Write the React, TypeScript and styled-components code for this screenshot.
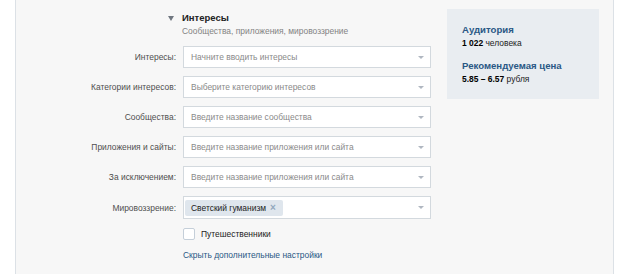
import React from 'react';
import styled, { createGlobalStyle } from 'styled-components';

const GlobalStyle = createGlobalStyle`
  html, body {
    margin: 0;
    padding: 0;
    background: #ffffff;
  }
  body {
    font-family: "Liberation Sans", Arial, sans-serif;
    font-size: 8.45px;
    color: #000;
  }
`;

const Panel = styled.div`
  margin-left: 15px;
  width: 597px;
  height: 274px;
  background: #f7f7f7;
  border-left: 1px solid #dce1e6;
  border-right: 1px solid #dce1e6;
  display: flex;
  align-items: flex-start;
`;

const Form = styled.div`
  display: grid;
  grid-template-columns: 160px 248px;
  column-gap: 7px;
  row-gap: 8px;
  padding-top: 11px;
`;

const SectionHead = styled.div`
  grid-column: 1 / 3;
  display: grid;
  grid-template-columns: 160px auto;
  column-gap: 6px;
`;

const Arrow = styled.span`
  justify-self: end;
  align-self: center;
  width: 0;
  height: 0;
  margin-right: 2px;
  border-left: 3px solid transparent;
  border-right: 3px solid transparent;
  border-top: 5px solid #707780;
`;

const Title = styled.div`
  font-weight: 700;
  font-size: 9.5px;
  line-height: 14px;
  color: #222;
`;

const Subtitle = styled.div`
  grid-column: 2;
  color: #838383;
  line-height: 13px;
`;

const Label = styled.label`
  justify-self: end;
  align-self: center;
  color: #4f4f4f;
`;

const Select = styled.div<{ $tall?: boolean }>`
  box-sizing: border-box;
  height: ${({ $tall }) => ($tall ? 23 : 22)}px;
  background: #fff;
  border: 1px solid #d3d9de;
  display: flex;
  align-items: center;
  padding: 0 6px 0 7px;
`;

const Placeholder = styled.span`
  flex: 1;
  color: #8a8a8a;
`;

const Caret = styled.span`
  width: 0;
  height: 0;
  border-left: 3px solid transparent;
  border-right: 3px solid transparent;
  border-top: 3px solid #b0b7c1;
`;

const Tag = styled.span`
  display: inline-flex;
  align-items: center;
  gap: 4px;
  background: #dfe6ed;
  border-radius: 2px;
  height: 16px;
  padding: 0 7px 0 6px;
  margin-left: -6px;
  color: #222;
`;

const TagClose = styled.span`
  color: #92a8bd;
  font-size: 10px;
  font-weight: 700;
`;

const Spacer = styled.div`
  flex: 1;
`;

const CheckRow = styled.label`
  grid-column: 2;
  display: flex;
  align-items: center;
  gap: 6px;
  height: 14px;
  color: #222;
`;

const Box = styled.span`
  box-sizing: border-box;
  width: 12px;
  height: 12px;
  background: #fff;
  border: 1px solid #c5cfd9;
  border-radius: 2px;
`;

const Link = styled.a`
  grid-column: 2;
  color: #2a5885;
  text-decoration: none;
  line-height: 12px;
`;

const Side = styled.div`
  margin-left: 16px;
  margin-top: 9px;
  width: 152px;
  height: 90px;
  box-sizing: border-box;
  background: #e9edf1;
  padding: 14px 15px;
`;

const SideTitle = styled.div`
  color: #2a5885;
  font-weight: 700;
  font-size: 9.6px;
  line-height: 14px;
`;

const SideValue = styled.div`
  line-height: 12px;
  color: #222;
  margin-bottom: 10px;
  b {
    font-weight: 700;
    color: #000;
  }
`;

const fields = [
  { label: 'Интересы:', placeholder: 'Начните вводить интересы' },
  { label: 'Категории интересов:', placeholder: 'Выберите категорию интересов' },
  { label: 'Сообщества:', placeholder: 'Введите название сообщества' },
  { label: 'Приложения и сайты:', placeholder: 'Введите название приложения или сайта' },
  { label: 'За исключением:', placeholder: 'Введите название приложения или сайта' },
];

export default function App() {
  return (
    <>
      <GlobalStyle />
      <Panel>
        <Form>
          <SectionHead>
            <Arrow />
            <Title>Интересы</Title>
            <Subtitle>Сообщества, приложения, мировоззрение</Subtitle>
          </SectionHead>

          {fields.map((f) => (
            <React.Fragment key={f.label}>
              <Label>{f.label}</Label>
              <Select>
                <Placeholder>{f.placeholder}</Placeholder>
                <Caret />
              </Select>
            </React.Fragment>
          ))}

          <Label>Мировоззрение:</Label>
          <Select $tall>
            <Tag>
              Светский гуманизм <TagClose>×</TagClose>
            </Tag>
            <Spacer />
            <Caret />
          </Select>

          <CheckRow>
            <Box />
            Путешественники
          </CheckRow>

          <Link href="#">Скрыть дополнительные настройки</Link>
        </Form>

        <Side>
          <SideTitle>Аудитория</SideTitle>
          <SideValue>
            <b>1 022</b> человека
          </SideValue>
          <SideTitle>Рекомендуемая цена</SideTitle>
          <SideValue>
            <b>5.85 – 6.57</b> рубля
          </SideValue>
        </Side>
      </Panel>
    </>
  );
}
